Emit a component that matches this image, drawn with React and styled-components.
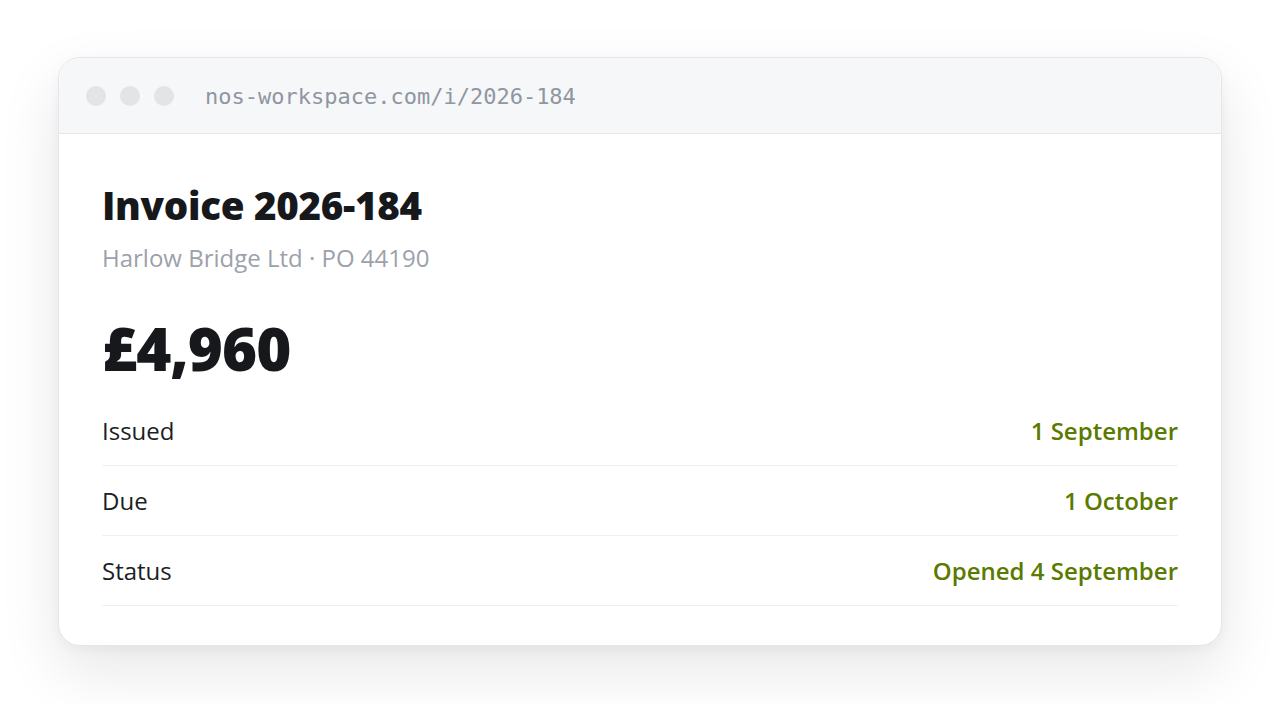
import styled, { createGlobalStyle } from 'styled-components';

const GlobalStyle = createGlobalStyle`
	html, body {
		margin: 0;
		padding: 0;
		background: #ffffff;
	}
	body {
		font-family: 'Open Sans', 'Noto Sans', sans-serif;
	}
`;

const rows = [
	{ label: 'Issued', value: '1 September' },
	{ label: 'Due', value: '1 October' },
	{ label: 'Status', value: 'Opened 4 September' },
];

export default function App() {
	return (
		<>
			<GlobalStyle />
			<Page>
				<Window>
					<TitleBar>
						<Dots>
							<Dot />
							<Dot />
							<Dot />
						</Dots>
						<Url>nos-workspace.com/i/2026-184</Url>
					</TitleBar>
					<Body>
						<Title>Invoice 2026-184</Title>
						<Subtitle>Harlow Bridge Ltd · PO 44190</Subtitle>
						<Amount>£4,960</Amount>
						<List>
							{rows.map((row) => (
								<Row key={row.label}>
									<Label>{row.label}</Label>
									<Value>{row.value}</Value>
								</Row>
							))}
						</List>
					</Body>
				</Window>
			</Page>
		</>
	);
}

const Page = styled.div`
	height: 704px;
	padding: 57px 58px 58px;
	box-sizing: border-box;
	display: flex;
	flex-direction: column;
`;

const Window = styled.div`
	flex: 1;
	background: #ffffff;
	border: 1px solid #e4e6ea;
	border-radius: 22px;
	overflow: hidden;
	box-shadow: 0 24px 60px rgba(17, 24, 39, 0.1), 0 4px 12px rgba(17, 24, 39, 0.04);
`;

const TitleBar = styled.div`
	height: 75px;
	background: #f6f7f9;
	border-bottom: 1px solid #e4e6ea;
	display: flex;
	align-items: center;
	padding: 0 27px;
	gap: 31px;
`;

const Dots = styled.div`
	display: flex;
	gap: 14px;
`;

const Dot = styled.span`
	width: 20px;
	height: 20px;
	border-radius: 50%;
	background: #e2e4e8;
`;

const Url = styled.span`
	font-family: 'DejaVu Sans Mono', 'Liberation Mono', monospace;
	font-size: 22px;
	color: #8f96a1;
	margin-top: 1px;
`;

const Body = styled.div`
	padding: 48px 43px 40px;
`;

const Title = styled.h1`
	margin: 0;
	font-size: 38.5px;
	font-weight: 800;
	line-height: 1.2;
	color: #16181c;
	letter-spacing: -0.3px;
`;

const Subtitle = styled.div`
	margin-top: 13px;
	font-size: 24px;
	color: #9ca1ab;
	line-height: 1.4;
`;

const Amount = styled.div`
	margin-top: 40px;
	font-size: 60px;
	font-weight: 800;
	line-height: 1.1;
	color: #16181c;
	letter-spacing: -1px;
`;

const List = styled.div`
	margin-top: 15px;
`;

const Row = styled.div`
	display: flex;
	justify-content: space-between;
	align-items: center;
	height: 69px;
	border-bottom: 1px solid #eef0f2;
	font-size: 24px;
`;

const Label = styled.span`
	color: #1b1e23;
`;

const Value = styled.span`
	color: #5a7a00;
	font-weight: 600;
`;
